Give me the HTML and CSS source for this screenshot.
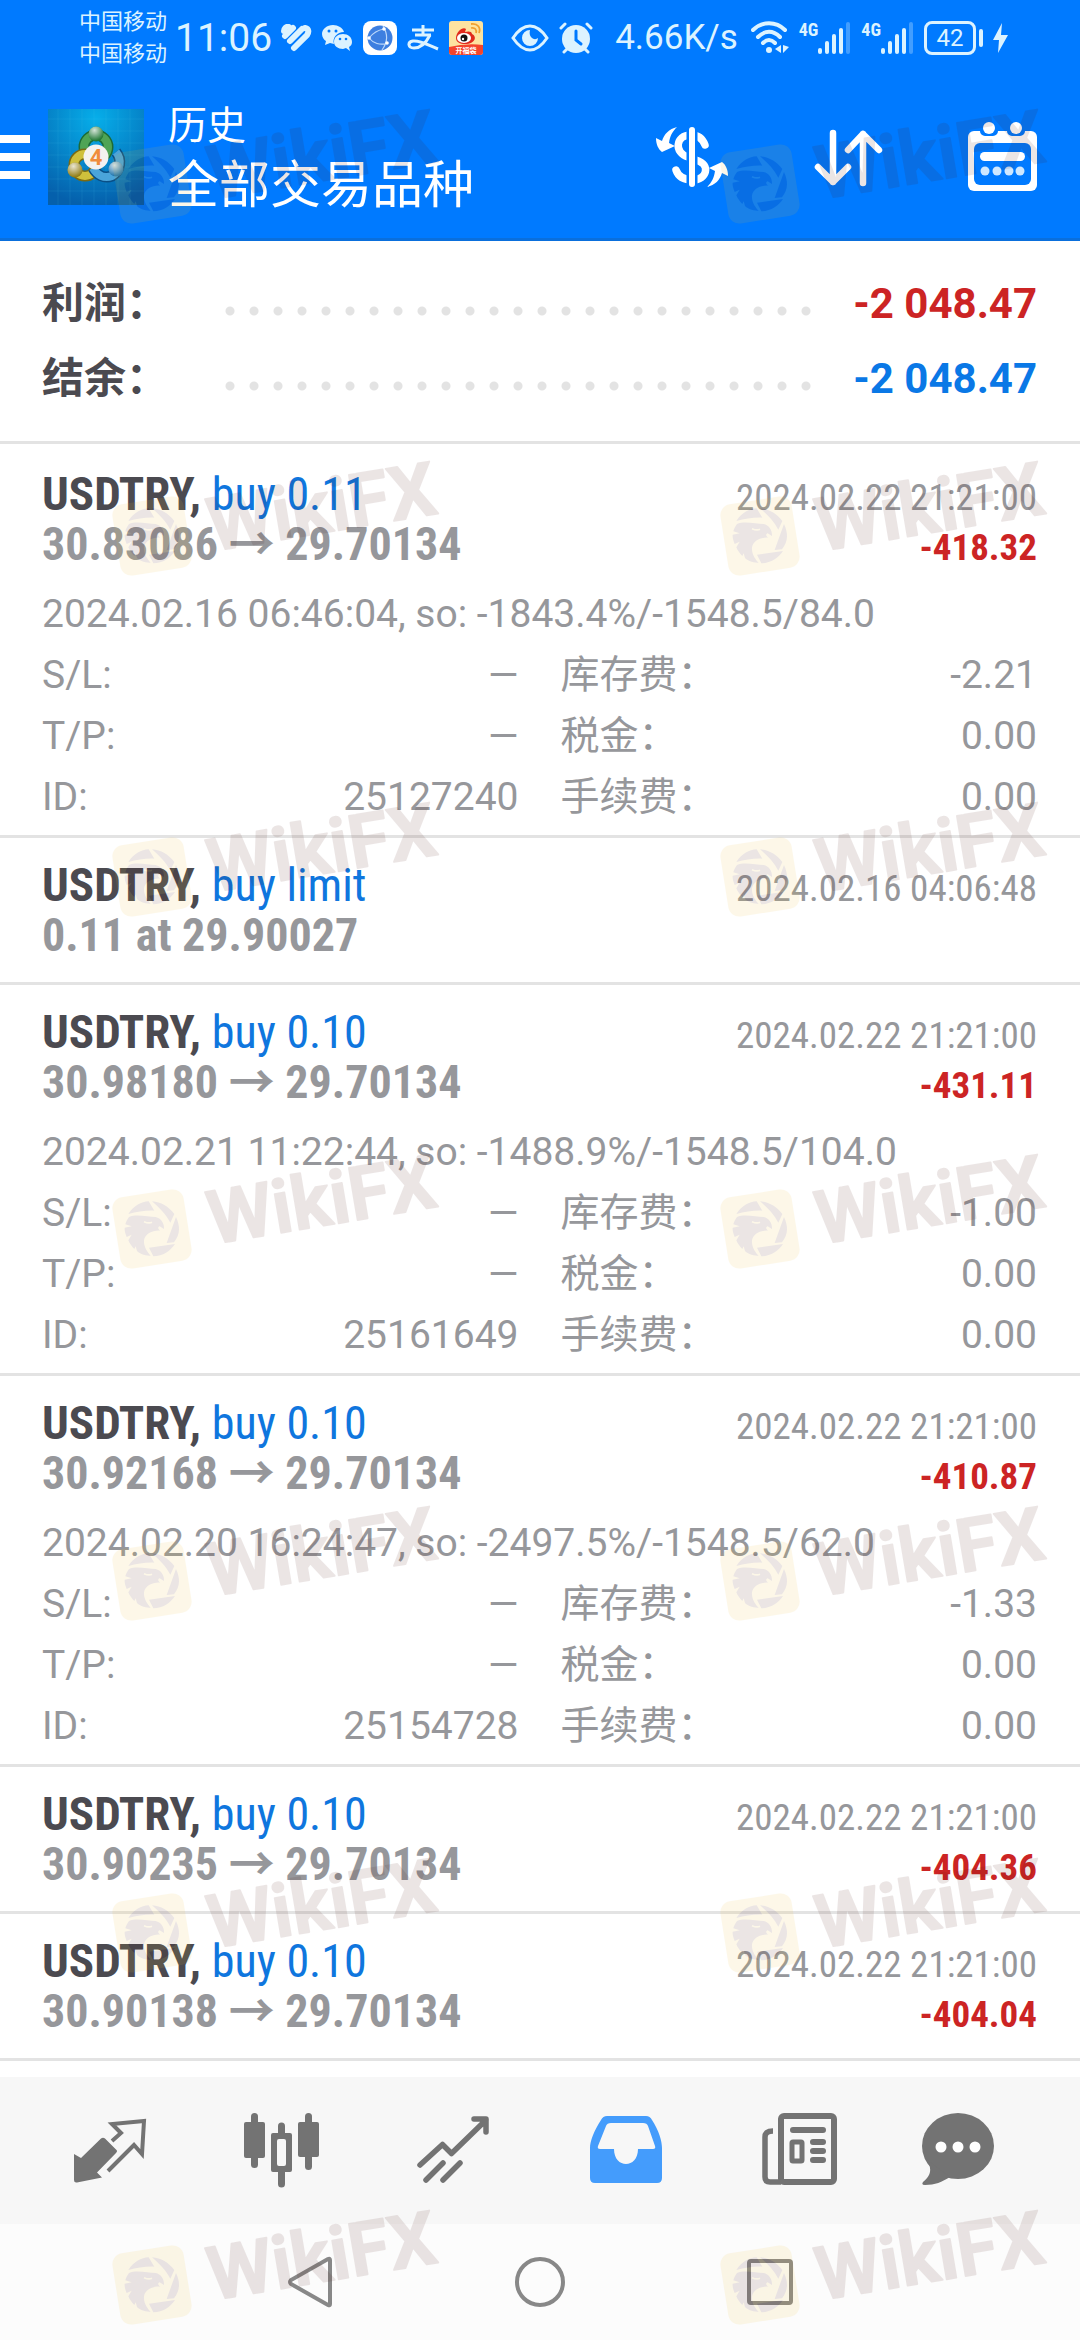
FILE: index.html
```html
<!DOCTYPE html>
<html lang="zh-CN">
  <head>
    <meta charset="UTF-8" />
    <meta name="viewport" content="width=device-width, initial-scale=1.0" />
    <title>历史</title>
    <link rel="stylesheet" href="styles.css">
  </head>
  <body>
    <div class="status-bar">
      <div class="status-left">
        <div class="carriers">
          <span>中国移动</span>
          <span>中国移动</span>
        </div>
        <span class="clock">11:06</span>
        <div class="status-icons">
          <!-- health -->
          <svg width="32" height="28" viewBox="0 0 32 28" fill="none" stroke="currentColor" stroke-width="6" stroke-linecap="round">
            <path d="M4 7c0-2 2-5 5-4" />
            <path d="M5 12L13 4" />
            <path d="M10 17L22 5" />
            <path d="M14 24L27 11c2-3 2-6-2-7" />
          </svg>
          <!-- wechat -->
          <svg width="31" height="28" viewBox="0 0 31 28">
            <path fill="currentColor" d="M11 1C5 1 0 5 0 10c0 3 2 6 4 7l-1 4 5-2 4 1c-2-6 3-12 10-12C21 4 16 1 11 1z" />
            <path fill="currentColor" d="M21 10c-5 0-9 3-9 8 0 4 4 7 9 7l3-1 4 3-1-4c2-1 3-3 3-5 0-5-4-8-9-8z" />
            <g fill="#007aff"><circle cx="7" cy="7" r="1.500" /><circle cx="14" cy="7" r="1.500" /><circle cx="18" cy="15" r="1.300" /><circle cx="24" cy="15" r="1.300" /></g>
          </svg>
          <!-- browser -->
          <svg width="34" height="34" viewBox="0 0 34 34">
            <rect width="34" height="34" rx="8" fill="#fff" />
            <circle cx="17" cy="17" r="12.500" fill="#3e7fe0" />
            <g fill="none" stroke="#bcd8fa" stroke-width="1.200">
              <path d="M20 5c5 8 5 16-1 24M6 17C10 12 15 9 21 8M6 17c4 5 11 8 19 5" />
            </g>
            <g fill="#fff"><circle cx="6" cy="17" r="1.800" /><circle cx="21" cy="8" r="1.800" /><circle cx="24" cy="22" r="1.800" /></g>
          </svg>
          <!-- alipay -->
          <svg width="32" height="26" viewBox="0 0 32 26" fill="none" stroke="currentColor" stroke-width="3">
            <path d="M5 5H27M16 0V10M8 10H24" />
            <path d="M23 10C19 18 13 23 7 23c-6 0-7-6-1-7 7-1 15 4 25 8" />
          </svg>
          <!-- weibo -->
          <svg width="34" height="34" viewBox="0 0 34 34">
            <rect width="34" height="34" rx="3" fill="#fde3a0" />
            <path d="M0 26Q17 22 34 24V31a3 3 0 0 1-3 3H3a3 3 0 0 1-3-3z" fill="#f4442c" />
            <path d="M7 17C7 11 14 5 17 8l-1 3c3-1 7-1 7 2 5 2 4 10-7 10-5 0-9-2-9-6z" fill="#e02a1c" />
            <ellipse cx="15" cy="17" rx="7" ry="5" fill="#fff" />
            <circle cx="15" cy="17" r="3.500" fill="#111" />
            <circle cx="14" cy="18" r="1.200" fill="#fff" />
            <path d="M22 7c4-1 6 2 5 5M22 3c7-1 10 4 8 9" fill="none" stroke="#f0a030" stroke-width="1.800" />
            <text class="badge-text" x="17" y="32" text-anchor="middle">开福袋</text>
          </svg>
        </div>
      </div>
      <div class="status-mid">
        <svg width="38" height="28" viewBox="0 0 38 28" fill="none" stroke="currentColor">
          <path d="M2 14C8 5 13 2 19 2s11 3 17 12c-6 9-11 12-17 12S8 23 2 14z" stroke-width="3" />
          <path d="M19 6a8 8 0 1 0 8 8c-3 3-10 0-8-8z" fill="currentColor" stroke="none" />
        </svg>
        <svg width="34" height="32" viewBox="0 0 34 32" fill="none" stroke="currentColor" stroke-linecap="round">
          <circle cx="17" cy="17" r="14" fill="currentColor" stroke="none" />
          <path d="M2 6L6 2M32 6L28 2M5 30L8 27M29 30L26 27" stroke-width="3" />
          <path d="M17 9V18L22 22" stroke="#007aff" stroke-width="3" />
        </svg>
        <span class="net-speed">4.66K/s</span>
      </div>
      <div class="status-right">
        <svg width="38" height="33" viewBox="0 0 38 33" fill="none" stroke="currentColor" stroke-width="4" stroke-linecap="round">
          <path d="M2 9C11 0 25 0 34 9M7 16C14 9 22 9 29 16M12 22C16 18 20 18 24 22" />
          <circle cx="18" cy="29" r="3" fill="currentColor" stroke="none" />
          <path d="M30 24V32L24 28zM32 24V32L38 26z" fill="currentColor" stroke="none" />
        </svg>
        <div class="signal">
          <span>4G</span>
          <svg width="33" height="33" viewBox="0 0 33 33" fill="currentColor">
            <rect x="0" y="27" width="4" height="6" rx="2" /><rect x="7" y="20" width="4" height="13" rx="2" /><rect x="14" y="13" width="4" height="20" rx="2" /><rect x="21" y="7" width="4" height="26" rx="2" /><rect x="28" y="1" width="4" height="32" rx="2" opacity=".3" />
          </svg>
        </div>
        <div class="signal">
          <span>4G</span>
          <svg width="33" height="33" viewBox="0 0 33 33" fill="currentColor">
            <rect x="0" y="27" width="4" height="6" rx="2" /><rect x="7" y="20" width="4" height="13" rx="2" /><rect x="14" y="13" width="4" height="20" rx="2" /><rect x="21" y="7" width="4" height="26" rx="2" /><rect x="28" y="1" width="4" height="32" rx="2" opacity=".3" />
          </svg>
        </div>
        <div class="battery"><span>42</span></div>
        <svg width="15" height="30" viewBox="0 0 15 30" fill="currentColor"><path d="M9 0L0 17H6L5 30 15 12H8z" /></svg>
      </div>
    </div>

    <header class="app-bar">
      <button class="menu" type="button" aria-label="菜单">
        <svg width="30" height="44" viewBox="0 0 30 44" fill="#fff"><path d="M0 0H30V8H0zM0 18H30V26H0zM0 36H30V44H0z" /></svg>
      </button>
      <svg class="app-logo" width="96" height="96" viewBox="0 0 96 96">
        <defs>
          <radialGradient id="sky" cx=".5" cy=".1" r=".9">
            <stop offset="0" stop-color="#06aeea" />
            <stop offset="1" stop-color="#0560ac" />
          </radialGradient>
          <radialGradient id="ball" cx=".4" cy=".25" r=".7">
            <stop offset="0" stop-color="#fff" stop-opacity=".8" />
            <stop offset="1" stop-color="#fff" stop-opacity="0" />
          </radialGradient>
        </defs>
        <rect width="96" height="96" fill="url(#sky)" />
        <path d="M10 0V96M22 0V96M34 0V96M46 0V96M58 0V96M70 0V96M82 0V96M0 10H96M0 22H96M0 34H96M0 46H96M0 58H96M0 70H96M0 82H96" stroke="#5cc8f0" stroke-opacity=".12" />
        <g fill="none">
          <circle cx="48" cy="38" r="12" stroke="#1d6b35" stroke-width="11" />
          <circle cx="48" cy="38" r="12" stroke="#4fa455" stroke-width="8" />
          <circle cx="37" cy="56" r="11" stroke="#7a6a12" stroke-width="11" />
          <circle cx="37" cy="56" r="11" stroke="#cfc03c" stroke-width="8" />
          <path d="M68 43a16 16 0 0 1-4 24c-8 3-15-1-19-8" stroke="#0a4f86" stroke-width="11" />
          <path d="M68 43a16 16 0 0 1-4 24c-8 3-15-1-19-8" stroke="#4aa4da" stroke-width="8" />
        </g>
        <circle cx="48" cy="25" r="7.500" fill="#247a37" /><circle cx="48" cy="25" r="7.500" fill="url(#ball)" />
        <circle cx="27" cy="61" r="7.500" fill="#94801a" /><circle cx="27" cy="61" r="7.500" fill="url(#ball)" />
        <circle cx="68" cy="60" r="7.500" fill="#2678ae" /><circle cx="68" cy="60" r="7.500" fill="url(#ball)" />
        <circle cx="48" cy="48" r="12.500" fill="#f4f2f0" />
        <text class="logo-text" x="48" y="56" text-anchor="middle">4</text>
      </svg>
      <div class="titles">
        <h1>历史</h1>
        <p>全部交易品种</p>
      </div>
      <div class="actions">
        <button type="button" aria-label="货币">
          <svg width="80" height="80" viewBox="0 0 80 80" fill="none" stroke-linecap="round">
            <path d="M53 28C50 20 45 18 39 18 23 18 22 36 36 40L44 43C60 48 54 63 41 63 31 63 26 59 24 53" stroke="#fff" stroke-width="7.500" />
            <path d="M40 13V67" stroke="#007aff" stroke-width="11" />
            <path d="M40 13V67" stroke="#fff" stroke-width="6" />
            <g fill="#fff">
              <path id="turn" d="M25 10C17 12 12 17 10 24L4 21C4 27 6 32 10 35L23 29 17 26C18 19 20 15 25 10z" />
              <use href="#turn" transform="rotate(180 40 40)" />
            </g>
          </svg>
        </button>
        <button type="button" aria-label="排序">
          <svg width="80" height="80" viewBox="0 0 80 80" fill="none" stroke="#fff" stroke-width="6.500" stroke-linecap="round" stroke-linejoin="round">
            <path d="M26 16V65M11 50L26 65 41 50M56 66V17M41 33L56 17 72 33" />
          </svg>
        </button>
        <button type="button" aria-label="日期">
          <svg width="80" height="80" viewBox="0 0 80 80">
            <rect x="6" y="14" width="69" height="60" rx="6" fill="#fff" />
            <rect x="12" y="26" width="57" height="42" rx="6" fill="#007aff" />
            <path d="M18 8H36V14a5 5 0 0 1-5 5H23a5 5 0 0 1-5-5zM45 8H63V14a5 5 0 0 1-5 5H50a5 5 0 0 1-5-5z" fill="#007aff" />
            <circle cx="27" cy="11" r="6" fill="#fff" /><circle cx="54" cy="11" r="6" fill="#fff" />
            <rect x="18" y="35" width="45" height="9" rx="4.500" fill="#fff" />
            <g fill="#cfe8ff"><circle cx="23" cy="54" r="4.500" /><circle cx="35" cy="54" r="4.500" /><circle cx="47" cy="54" r="4.500" /><circle cx="58" cy="54" r="4.500" /></g>
          </svg>
        </button>
      </div>
    </header>

    <main>
      <dl class="summary">
        <div>
          <dt>利润：</dt>
          <dd class="leader"></dd>
          <dd class="loss">-2 048.47</dd>
        </div>
        <div>
          <dt>结余：</dt>
          <dd class="leader"></dd>
          <dd class="balance">-2 048.47</dd>
        </div>
      </dl>

      <section class="deals">
        <article class="deal">
          <div class="deal-row">
            <h2>USDTRY, <span>buy 0.11</span></h2>
            <time>2024.02.22 21:21:00</time>
          </div>
          <div class="deal-row">
            <span class="price">30.83086 → 29.70134</span>
            <span class="profit">-418.32</span>
          </div>
          <div class="details">
            <p>2024.02.16 06:46:04, so: -1843.4%/-1548.5/84.0</p>
            <dl>
              <div><dt>S/L:</dt><dd>—</dd></div>
              <div><dt>库存费：</dt><dd>-2.21</dd></div>
              <div><dt>T/P:</dt><dd>—</dd></div>
              <div><dt>税金：</dt><dd>0.00</dd></div>
              <div><dt>ID:</dt><dd>25127240</dd></div>
              <div><dt>手续费：</dt><dd>0.00</dd></div>
            </dl>
          </div>
        </article>

        <article class="deal">
          <div class="deal-row">
            <h2>USDTRY, <span>buy limit</span></h2>
            <time>2024.02.16 04:06:48</time>
          </div>
          <div class="deal-row">
            <span class="price">0.11 at 29.90027</span>
          </div>
        </article>

        <article class="deal">
          <div class="deal-row">
            <h2>USDTRY, <span>buy 0.10</span></h2>
            <time>2024.02.22 21:21:00</time>
          </div>
          <div class="deal-row">
            <span class="price">30.98180 → 29.70134</span>
            <span class="profit">-431.11</span>
          </div>
          <div class="details">
            <p>2024.02.21 11:22:44, so: -1488.9%/-1548.5/104.0</p>
            <dl>
              <div><dt>S/L:</dt><dd>—</dd></div>
              <div><dt>库存费：</dt><dd>-1.00</dd></div>
              <div><dt>T/P:</dt><dd>—</dd></div>
              <div><dt>税金：</dt><dd>0.00</dd></div>
              <div><dt>ID:</dt><dd>25161649</dd></div>
              <div><dt>手续费：</dt><dd>0.00</dd></div>
            </dl>
          </div>
        </article>

        <article class="deal">
          <div class="deal-row">
            <h2>USDTRY, <span>buy 0.10</span></h2>
            <time>2024.02.22 21:21:00</time>
          </div>
          <div class="deal-row">
            <span class="price">30.92168 → 29.70134</span>
            <span class="profit">-410.87</span>
          </div>
          <div class="details">
            <p>2024.02.20 16:24:47, so: -2497.5%/-1548.5/62.0</p>
            <dl>
              <div><dt>S/L:</dt><dd>—</dd></div>
              <div><dt>库存费：</dt><dd>-1.33</dd></div>
              <div><dt>T/P:</dt><dd>—</dd></div>
              <div><dt>税金：</dt><dd>0.00</dd></div>
              <div><dt>ID:</dt><dd>25154728</dd></div>
              <div><dt>手续费：</dt><dd>0.00</dd></div>
            </dl>
          </div>
        </article>

        <article class="deal">
          <div class="deal-row">
            <h2>USDTRY, <span>buy 0.10</span></h2>
            <time>2024.02.22 21:21:00</time>
          </div>
          <div class="deal-row">
            <span class="price">30.90235 → 29.70134</span>
            <span class="profit">-404.36</span>
          </div>
        </article>

        <article class="deal">
          <div class="deal-row">
            <h2>USDTRY, <span>buy 0.10</span></h2>
            <time>2024.02.22 21:21:00</time>
          </div>
          <div class="deal-row">
            <span class="price">30.90138 → 29.70134</span>
            <span class="profit">-404.04</span>
          </div>
        </article>
      </section>
    </main>

    <nav class="tabs">
      <button type="button" aria-label="行情">
        <svg width="96" height="96" viewBox="0 0 96 96">
          <path d="M12 51L19 55 39 35.500Q41 34 43 35.500L54 46.500Q56 48 54 50L35 69.500 40 74.500 15 79.500Q12 80 12 77z" fill="currentColor" />
          <path d="M50 38L59 30 50 21 82 18 80 51 72 42 46 68" fill="none" stroke="currentColor" stroke-width="4" stroke-linejoin="miter" />
        </svg>
      </button>
      <button type="button" aria-label="图表">
        <svg width="96" height="96" viewBox="0 0 96 96" fill="currentColor">
          <rect x="10" y="19" width="21" height="36" rx="2" /><rect x="17" y="10" width="7" height="55" rx="3.500" />
          <path fill-rule="evenodd" d="M39 30H56a2 2 0 0 1 2 2V67a2 2 0 0 1-2 2H39a2 2 0 0 1-2-2V32a2 2 0 0 1 2-2zM45 36a2 2 0 0 0-2 2V61a2 2 0 0 0 2 2H50a2 2 0 0 0 2-2V38a2 2 0 0 0-2-2z" />
          <path d="M44 32V23a3.500 3.500 0 0 1 7 0V32zM44 67V81a3.500 3.500 0 0 0 7 0V67z" />
          <rect x="64" y="19" width="21" height="35" rx="2" /><rect x="71" y="10" width="7" height="57" rx="3.500" />
        </svg>
      </button>
      <button type="button" aria-label="交易">
        <svg width="96" height="96" viewBox="0 0 96 96" fill="none" stroke="currentColor" stroke-width="5.500" stroke-linecap="round" stroke-linejoin="round">
          <path d="M14 62L36.500 41.500 45.500 50.500 80 17M68 16H80V29" />
          <path d="M20 77L37 60M37 77L54 60" />
        </svg>
      </button>
      <button class="active" type="button" aria-label="历史">
        <svg width="96" height="96" viewBox="0 0 96 96" fill="currentColor">
          <path fill-rule="evenodd" d="M29 13H68Q72 13 74 17C81 28 84 38 84 45V75Q84 80 79 80H17Q12 80 12 75V45C12 38 16 28 23 17Q25 13 29 13zM33 20Q29 20 28 23L20 43Q19 46 22 46H36C36 56 42 61 48 61S60 56 60 46H75Q78 46 77 43L70 23Q69 20 65 20z" />
        </svg>
      </button>
      <button type="button" aria-label="新闻">
        <svg width="96" height="96" viewBox="0 0 96 96" fill="none" stroke="currentColor" stroke-width="6">
          <rect x="31" y="13" width="53" height="66" rx="3" />
          <path d="M23 28Q15 28 15 34V74Q15 79 20 79H31" stroke-width="5.500" />
          <path d="M43 27H73M63 39H73M63 48H73M63 57H73" stroke-linecap="round" />
          <rect x="42" y="39" width="10" height="19" stroke-width="5" rx="1" />
        </svg>
      </button>
      <button type="button" aria-label="消息">
        <svg width="96" height="96" viewBox="0 0 96 96" fill="currentColor">
          <ellipse cx="36" cy="43" rx="36" ry="33" />
          <path d="M4 56C10 64 10 72 1 79Q-1 82 3 82C13 82 20 79 28 74z" />
          <g fill="#fff"><circle cx="19" cy="44" r="5.500" /><circle cx="36" cy="44" r="5.500" /><circle cx="53" cy="44" r="5.500" /></g>
        </svg>
      </button>
    </nav>

    <nav class="system-nav">
      <button type="button" aria-label="返回">
        <svg width="54" height="54" viewBox="0 0 54 54"><path d="M47 5V49Q47 51 45 50L8 29Q6 27 8 25L45 4Q47 3 47 5z" /></svg>
      </button>
      <button type="button" aria-label="主屏幕">
        <svg width="54" height="54" viewBox="0 0 54 54"><circle cx="27" cy="27" r="23" /></svg>
      </button>
      <button type="button" aria-label="最近任务">
        <svg width="54" height="54" viewBox="0 0 54 54"><rect x="6" y="6" width="42" height="42" rx="2" /></svg>
      </button>
    </nav>

    <svg class="defs" width="0" height="0">
      <symbol id="mark" viewBox="-42 -80 332 125">
        <g opacity=".105">
          <rect x="-36" y="-36" width="72" height="72" rx="11" fill="#eebe32" transform="rotate(-9)" />
          <g transform="scale(.3333) translate(-157 -298)" fill="#4b1410">
            <path d="M86 253C104 226 124 217 147 215L164 243C138 242 112 246 86 253z" />
            <path d="M157 215C184 217 207 231 224 253L212 279C198 253 180 235 157 215z" />
            <path d="M229 262C241 288 243 312 223 338L201 340z" />
            <path d="M148 354L226 343C212 364 190 379 161 380z" />
            <path d="M88 262C110 252 146 262 168 262 184 266 194 280 193 298L180 290C174 292 174 298 182 303 160 301 136 312 133 332 131 352 145 370 153 378 135 379 120 372 112 364L108 350 104 358C96 350 90 342 86 332L96 315 81 322C77 312 74 302 75 294L96 290 77 284C79 276 82 270 88 262z" />
            <path d="M133 276C142 280 150 281 157 278" fill="none" stroke="#eebe32" stroke-width="5" />
          </g>
          <text class="mark-text" x="57" y="25" transform="rotate(-9.500)">WikiFX</text>
        </g>
      </symbol>
    </svg>
    <div class="marks marks-head" aria-hidden="true">
      <svg><use href="#mark" /></svg><svg><use href="#mark" /></svg>
      <svg><use href="#mark" /></svg><svg><use href="#mark" /></svg>
    </div>
    <div class="marks marks-list" aria-hidden="true">
      <svg><use href="#mark" /></svg><svg><use href="#mark" /></svg>
      <svg><use href="#mark" /></svg><svg><use href="#mark" /></svg>
      <svg><use href="#mark" /></svg><svg><use href="#mark" /></svg>
      <svg><use href="#mark" /></svg><svg><use href="#mark" /></svg>
      <svg><use href="#mark" /></svg><svg><use href="#mark" /></svg>
    </div>
  </body>
</html>
```
FILE: styles.css
```css
*,
*::before,
*::after {
  box-sizing: border-box;
}

body {
  position: relative;
  display: flex;
  flex-direction: column;
  min-height: 100vh;
  margin: 0;
  background: #fff;
  color: #4b4a50;
  font-family: Roboto, "Noto Sans CJK SC", sans-serif;
}

h1,
h2,
p,
dl,
dd {
  margin: 0;
}

button {
  padding: 0;
  border: 0;
  background: none;
  color: inherit;
  font: inherit;
}

svg {
  display: block;
  flex: none;
}

/* Phone status bar */
.status-bar {
  display: flex;
  align-items: center;
  height: 75px;
  padding: 0 72px 0 79px;
  background: #007aff;
  color: #dcf3ff;
}

.status-left,
.status-mid,
.status-right,
.status-icons {
  display: flex;
  align-items: center;
  gap: 10px;
}

.status-left {
  gap: 8px;
}

.carriers {
  display: flex;
  flex-direction: column;
  font-size: 22px;
  line-height: 32px;
}

.clock {
  font-size: 39px;
}

.status-mid {
  margin-left: 28px;
}

.net-speed {
  margin-left: 12px;
  font-size: 35px;
}

.status-right {
  margin-left: auto;
}

.signal {
  display: flex;
  align-items: flex-start;
}

.signal span {
  font-family: "Roboto Condensed", sans-serif;
  font-size: 18px;
  font-weight: bold;
  line-height: 18px;
}

.battery {
  position: relative;
  width: 52px;
  height: 34px;
  margin-right: 7px;
  border: 3px solid currentColor;
  border-radius: 8px;
  font-size: 24px;
  line-height: 28px;
  text-align: center;
}

.battery::after {
  content: "";
  position: absolute;
  top: 5px;
  right: -10px;
  width: 4px;
  height: 18px;
  border-radius: 2px;
  background: currentColor;
}

.badge-text {
  fill: #fff;
  font-size: 7px;
  font-weight: bold;
}

/* App bar */
.app-bar {
  display: flex;
  align-items: center;
  height: 166px;
  padding-right: 38px;
  border-bottom: 3px solid #0a6fdc;
  background: #007aff;
  color: #fff;
}

.app-logo {
  margin: 0 24px 0 18px;
}

.logo-text {
  fill: #f08c3c;
  font-size: 22px;
  font-weight: bold;
}

.titles {
  padding-top: 4px;
}

.titles h1 {
  font-size: 39px;
  font-weight: normal;
  line-height: 54px;
}

.titles p {
  font-size: 51px;
  line-height: 66px;
}

.actions {
  display: flex;
  gap: 75px;
  margin-left: auto;
}

/* Totals */
.summary {
  padding: 25px 43px 25px 42px;
  border-bottom: 3px solid #e3e3e3;
  font-size: 42px;
  font-weight: bold;
  line-height: 75px;
}

.summary div {
  display: grid;
  grid-template-columns: 176px 1fr 219px;
}

.leader {
  background: radial-gradient(circle at 12px 45px, #e3e3e3 4px, transparent 5px) repeat-x;
  background-size: 24px 75px;
}

.loss,
.balance {
  text-align: right;
}

.loss {
  color: #cc2424;
}

.balance {
  color: #0a78e6;
}

/* Deals */
.deals {
  padding-top: 3px;
}

.deal {
  padding: 21px 43px 21px 42px;
  border-bottom: 3px solid #e3e3e3;
  font-family: "Roboto Condensed", "Noto Sans CJK SC", sans-serif;
}

.deal:has(.details) {
  padding-bottom: 8px;
}

.deal-row {
  display: flex;
  justify-content: space-between;
  align-items: baseline;
  height: 51px;
  line-height: 51px;
}

.deal h2 {
  font-size: 47px;
}

.deal h2 span {
  color: #0f76de;
  font-size: 46px;
  font-weight: normal;
}

.deal time {
  color: #96979b;
  font-size: 37px;
}

.price {
  color: #96979b;
  font-size: 46px;
  font-weight: bold;
}

.profit {
  color: #cc2424;
  font-size: 37px;
  font-weight: bold;
}

.details {
  padding-top: 14px;
  color: #96979b;
  font-family: Roboto, "Noto Sans CJK SC", sans-serif;
  font-size: 39px;
  line-height: 61px;
}

.deal:has(.details) {
  padding-bottom: 7px;
}

.details dl {
  display: grid;
  grid-template-columns: 1fr 1fr;
  column-gap: 42px;
}

.details dl div {
  display: flex;
  justify-content: space-between;
  height: 61px;
}

/* Bottom navigation */
.tabs {
  display: grid;
  grid-template-columns: repeat(6, 1fr);
  height: 147px;
  margin-top: auto;
  padding: 0 24px;
  background: #f7f7f7;
  color: #737373;
}

.tabs button,
.system-nav button {
  display: flex;
  align-items: center;
  justify-content: center;
}

.tabs .active {
  color: #449cfc;
}

.system-nav {
  display: flex;
  justify-content: center;
  height: 116px;
  background: #fcfcfc;
}

.system-nav button {
  width: 230px;
}

.system-nav svg {
  fill: none;
  stroke: #888;
  stroke-width: 4;
}

/* Watermark laid over the page */
.defs {
  position: absolute;
}

.marks {
  position: absolute;
  left: 0;
  right: 0;
  display: grid;
  grid-template-columns: auto auto;
  justify-content: space-between;
  row-gap: 227px;
  padding: 0 30px 0 110px;
  pointer-events: none;
}

.marks svg {
  width: 332px;
  height: 125px;
  overflow: visible;
}

.marks-head {
  top: 104px;
}

.marks-list {
  top: 797px;
}

.mark-text {
  fill: #4b1410;
  stroke: #4b1410;
  stroke-width: 2px;
  stroke-linejoin: round;
  font-size: 74px;
  font-weight: 600;
}
```
